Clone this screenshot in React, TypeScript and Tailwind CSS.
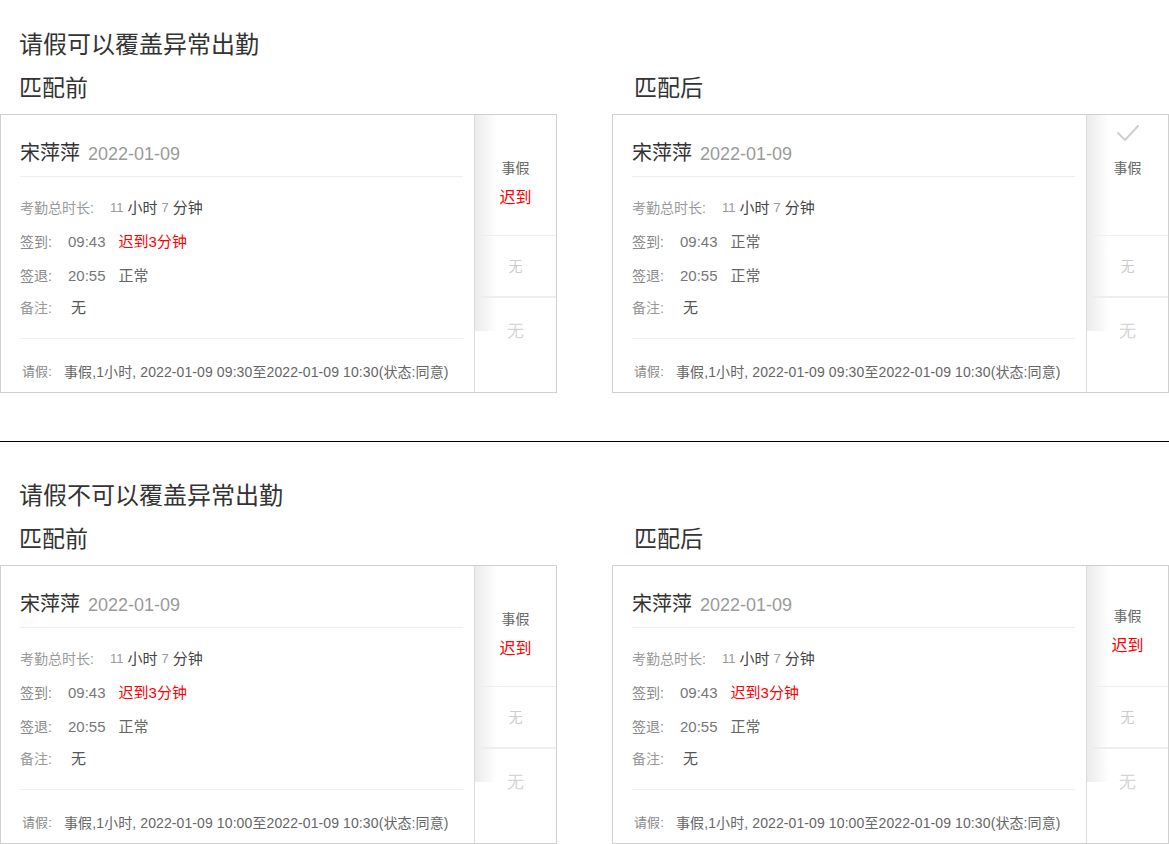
type CardProps = {
  checkIn: 'late' | 'normal';
  leave: string;
  checked?: boolean;
  showLate?: boolean;
};

const CheckMark = () => (
  <svg width="24" height="18" viewBox="0 0 24 18" fill="none" className="mx-auto">
    <polyline points="2,9 9,16 22,2" stroke="#cfcfcf" strokeWidth="2" strokeLinecap="round" strokeLinejoin="round" />
  </svg>
);

const AttendanceCard = ({ checkIn, leave, checked, showLate }: CardProps) => (
  <div className="flex h-[279px] w-[557px] border border-[#d0d0d0] bg-white">
    {/* Main info */}
    <div className="flex w-[473px] flex-none flex-col overflow-hidden pl-[19px] pr-[11px]">
      <div className="flex items-baseline border-b border-[#eeeeee] pt-[23px] pb-[7px] leading-[30px]">
        <span className="text-[20px] text-[#333]">宋萍萍</span>
        <span className="ml-[8px] text-[18px] font-light text-[#9a9a9a]">2022-01-09</span>
      </div>

      <div className="border-b border-[#eeeeee] pt-[14px] pb-[14px]">
        <div className="flex h-[34px] items-center">
          <span className="text-[14px] text-[#9a9a9a]">考勤总时长:</span>
          <span className="ml-[16px] text-[13px] text-[#9a9a9a]">11</span>
          <span className="ml-[4px] text-[15px] text-[#444]">小时</span>
          <span className="ml-[4px] text-[13px] text-[#9a9a9a]">7</span>
          <span className="ml-[4px] text-[15px] text-[#444]">分钟</span>
        </div>
        <div className="flex h-[35px] items-center text-[15px]">
          <span className="w-[48px] text-[14px] text-[#888]">签到:</span>
          <span className="text-[#777]">09:43</span>
          {checkIn === 'late' ? (
            <span className="ml-[13px] text-[#ff0000]">迟到3分钟</span>
          ) : (
            <span className="ml-[13px] text-[#666]">正常</span>
          )}
        </div>
        <div className="flex h-[33px] items-center text-[15px]">
          <span className="w-[48px] text-[14px] text-[#888]">签退:</span>
          <span className="text-[#777]">20:55</span>
          <span className="ml-[13px] text-[#666]">正常</span>
        </div>
        <div className="flex h-[31px] items-center text-[15px]">
          <span className="w-[51px] text-[14px] text-[#999]">备注:</span>
          <span className="text-[#555]">无</span>
        </div>
      </div>

      <div className="flex pt-[22px] text-[14px] leading-[22px] tracking-[0.1px] text-[#666]">
        <span className="w-[44px] flex-none pl-[2px] text-[13px] text-[#888]">请假:</span>
        <span className="whitespace-nowrap">{leave}</span>
      </div>
    </div>

    {/* Side column */}
    <div className="relative flex w-[82px] flex-none flex-col border-l border-[#dcdcdc]">
      <div className="pointer-events-none absolute left-0 top-0 h-[216px] w-[22px] bg-gradient-to-r from-[#ebebeb] to-transparent" />
      <div className="relative h-[121px] flex-none border-b border-[#eeeeee] text-center">
        {checked ? (
          <div className="pt-[9px]">
            <CheckMark />
            <div className="mt-[12px] text-[14px] leading-[29px] text-[#666]">事假</div>
          </div>
        ) : (
          <div className={showLate ? 'pt-[39px]' : 'pt-[36px]'}>
            <div className="text-[14px] leading-[29px] text-[#666]">事假</div>
            <div className="text-[16px] leading-[29px] text-[#ff0000]">迟到</div>
          </div>
        )}
      </div>
      <div className="relative flex h-[62px] flex-none items-center justify-center border-b-2 border-[#eeeeee] text-[14px] text-[#cccccc]">
        无
      </div>
      <div className="relative pt-[24px] text-center text-[17px] leading-[20px] text-[#d6d6d6]">无</div>
    </div>
  </div>
);

type SectionProps = {
  title: string;
  leaveTime: string;
  afterCheckIn: 'late' | 'normal';
  afterChecked?: boolean;
};

const Section = ({ title, leaveTime, afterCheckIn, afterChecked }: SectionProps) => {
  const leave = `事假,1小时, 2022-01-09 ${leaveTime}至2022-01-09 10:30(状态:同意)`;
  return (
    <div>
      <h2 className="pl-[19px] text-[24px] leading-[32px] text-[#333]">{title}</h2>
      <div className="mt-[11px] grid grid-cols-[557px_557px] gap-x-[55px]">
        <div>
          <h3 className="mb-[10px] pl-[19px] text-[23px] leading-[32px] text-[#333]">匹配前</h3>
          <AttendanceCard checkIn="late" leave={leave} showLate />
        </div>
        <div>
          <h3 className="mb-[10px] pl-[22px] text-[23px] leading-[32px] text-[#333]">匹配后</h3>
          <AttendanceCard checkIn={afterCheckIn} leave={leave} checked={afterChecked} />
        </div>
      </div>
    </div>
  );
};

export default function App() {
  return (
    <div className="min-h-[844px] w-[1169px] overflow-hidden bg-white font-['Liberation_Sans','Noto_Sans_CJK_SC',sans-serif]">
      <div className="pt-[29px]">
        <Section title="请假可以覆盖异常出勤" leaveTime="09:30" afterCheckIn="normal" afterChecked />
      </div>
      <div className="mt-[48px] h-px bg-black" />
      <div className="pt-[38px]">
        <Section title="请假不可以覆盖异常出勤" leaveTime="10:00" afterCheckIn="late" />
      </div>
    </div>
  );
}
